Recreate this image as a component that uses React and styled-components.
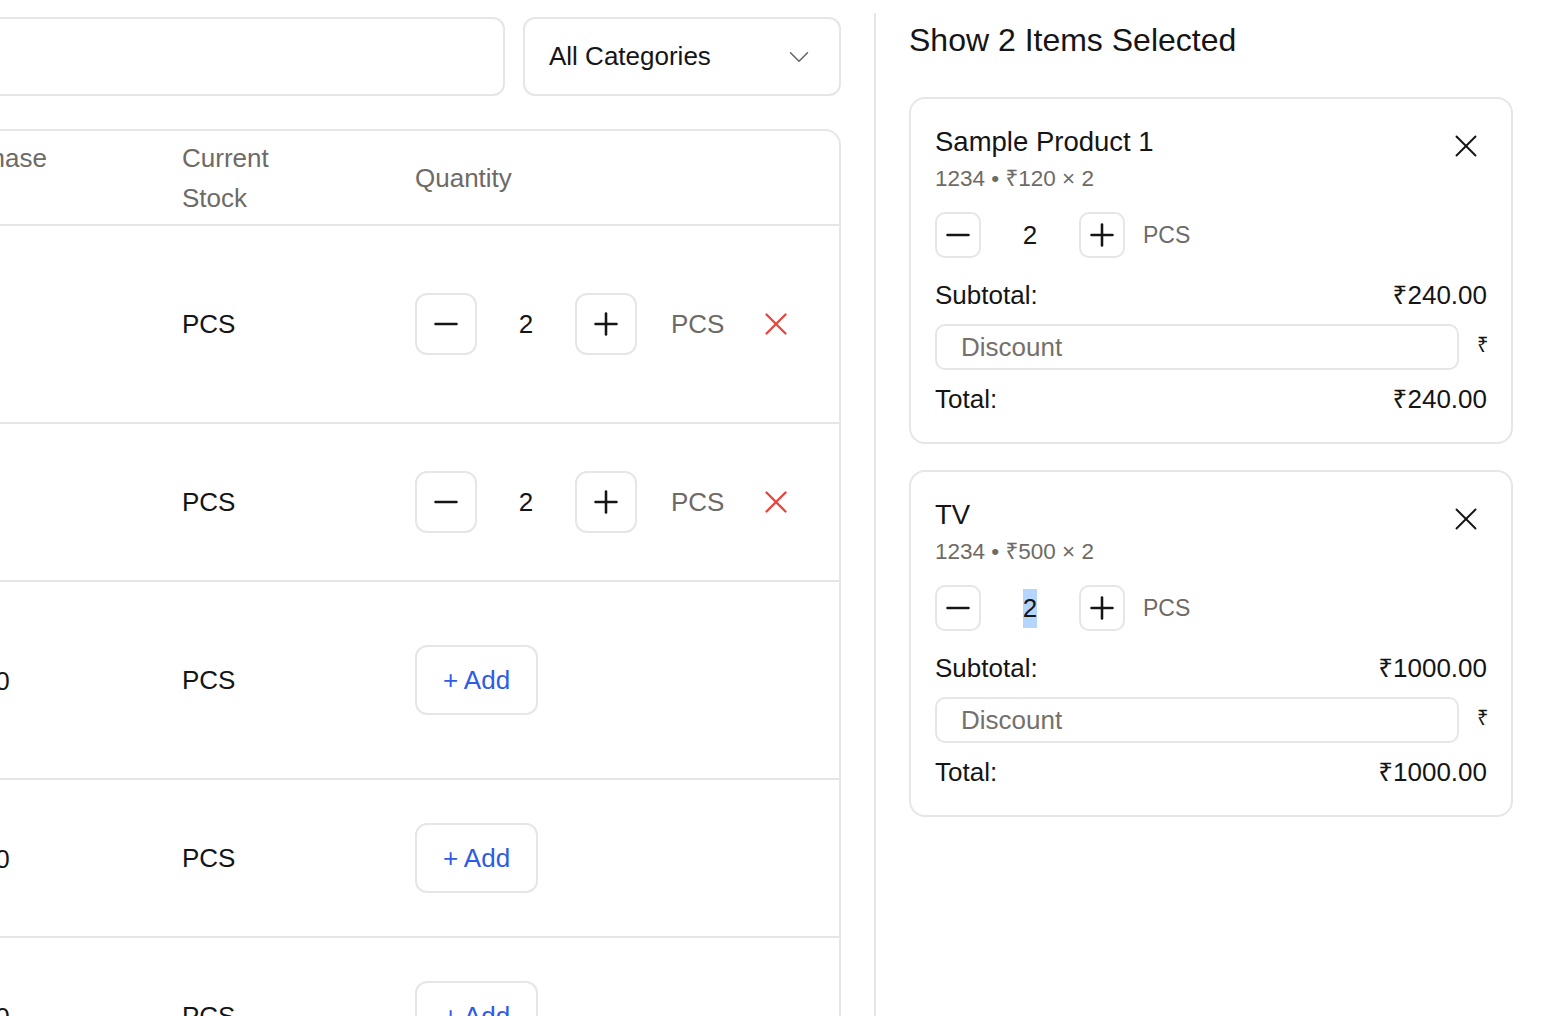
import React from "react";
import styled, { createGlobalStyle } from "styled-components";
import { Minus, Plus, X, ChevronDown } from "lucide-react";

const GlobalStyle = createGlobalStyle`
  html, body {
    margin: 0;
    padding: 0;
    background: #ffffff;
    overflow: hidden;
  }
  body {
    font-family: "Liberation Sans", "Noto Sans", "DejaVu Sans", sans-serif;
    color: #151515;
  }
  * {
    box-sizing: border-box;
  }
`;

const Page = styled.div`
  display: flex;
  height: 100vh;
  overflow: hidden;
`;

const LeftPanel = styled.div`
  flex: 0 0 1241px;
  margin-left: -400px;
  padding-top: 17px;
  display: flex;
  flex-direction: column;
  gap: 33px;
`;

const SearchRow = styled.div`
  flex-shrink: 0;
  display: flex;
  gap: 18px;
  height: 79px;
`;

const SearchInput = styled.input`
  flex: 1;
  border: 2px solid #e6e6e6;
  border-radius: 12px;
  outline: none;
  font: 26px "Liberation Sans", sans-serif;
`;

const CategorySelect = styled.div`
  width: 318px;
  display: flex;
  align-items: center;
  justify-content: space-between;
  padding: 0 23px 0 24px;
  border: 2px solid #e6e6e6;
  border-radius: 12px;
  font-size: 26px;
  color: #151515;
`;

const Table = styled.div`
  flex: 1 0 auto;
  border: 2px solid #e6e6e6;
  border-bottom: none;
  border-radius: 16px 16px 0 0;
`;

const Columns = `
  display: grid;
  grid-template-columns: 311px 245px 233px 1fr;
  align-items: center;
  padding: 0 24px;
  border-bottom: 2px solid #e6e6e6;
`;

const HeaderRow = styled.div`
  ${Columns}
  height: 95px;
`;

const HeaderLabel = styled.div`
  max-width: 130px;
  font-size: 26px;
  line-height: 40px;
  color: #6e6a66;
`;

const Row = styled.div`
  ${Columns}
  height: ${(p) => (p.$tall ? "198px" : "158px")};
`;

const Cell = styled.div`
  font-size: 26px;
  color: #151515;
`;

const Stepper = styled.div`
  display: flex;
  align-items: center;
`;

const StepButton = styled.button`
  width: ${(p) => p.$size}px;
  height: ${(p) => p.$size}px;
  padding: 0;
  display: flex;
  align-items: center;
  justify-content: center;
  background: #fff;
  border: 2px solid #e6e6e6;
  border-radius: ${(p) => (p.$size > 50 ? "12px" : "10px")};
  color: #151515;
`;

const StepValue = styled.div`
  width: 98px;
  text-align: center;
  font-size: 26px;
  line-height: 40px;
  color: #151515;
`;

const Selected = styled.span`
  display: inline-block;
  line-height: 39px;
  background: #b4d5fe;
`;

const Unit = styled.span`
  margin-left: ${(p) => p.$gap}px;
  font-size: ${(p) => p.$size}px;
  color: #6e6a66;
`;

const RemoveButton = styled.button`
  margin-left: 33px;
  padding: 0;
  border: none;
  background: none;
  display: flex;
  color: #e5483e;
`;

const AddButton = styled.button`
  width: 123px;
  height: 70px;
  background: #fff;
  border: 2px solid #e6e6e6;
  border-radius: 12px;
  font: 26px "Liberation Sans", sans-serif;
  color: #2d5be3;
`;

const RightPanel = styled.div`
  flex: 1;
  margin: 13px 0 0 33px;
  border-left: 2px solid #e6e6e6;
  padding: 8px 39px 0 33px;
  display: flex;
  flex-direction: column;
`;

const Heading = styled.h2`
  margin: 0 0 38px;
  font-size: 32px;
  line-height: 38px;
  font-weight: 400;
  color: #151515;
`;

const CardList = styled.div`
  display: flex;
  flex-direction: column;
  gap: 26px;
`;

const Card = styled.div`
  border: 2px solid #e6e6e6;
  border-radius: 16px;
  padding: 26px 24px 27px;
  display: flex;
  flex-direction: column;
`;

const CardHeader = styled.div`
  display: flex;
  justify-content: space-between;
  align-items: flex-start;
`;

const CardTitle = styled.div`
  font-size: 27.5px;
  line-height: 34px;
  color: #151515;
`;

const CloseButton = styled.button`
  margin: 2px 2px 0 0;
  padding: 0;
  border: none;
  background: none;
  display: flex;
  color: #151515;
`;

const CardMeta = styled.div`
  font-size: 22.5px;
  line-height: 28px;
  color: #6e6a66;
`;

const CardStepper = styled(Stepper)`
  margin-top: 19px;
`;

const SumRow = styled.div`
  display: flex;
  justify-content: space-between;
  margin-top: ${(p) => p.$top}px;
  font-size: 26px;
  line-height: 32px;
  color: #151515;
`;

const DiscountRow = styled.div`
  display: flex;
  align-items: center;
  gap: 18px;
  margin-top: 13px;
`;

const DiscountInput = styled.input`
  flex: 1;
  height: 46px;
  padding: 0 24px;
  border: 2px solid #e6e6e6;
  border-radius: 10px;
  outline: none;
  font: 26px "Liberation Sans", sans-serif;
  color: #151515;

  &::placeholder {
    color: #75706b;
  }
`;

const Rupee = styled.span`
  width: 10px;
  font-size: 20px;
  line-height: 20px;
  margin-top: -4px;
  color: #151515;
`;

const rows = [
  { name: "Sample Product 1", price: "₹120", qty: 2, tall: true },
  { name: "TV", price: "₹500", qty: 2 },
  { name: "Sample Product 2", price: "₹1000", tall: true },
  { name: "Speaker", price: "₹1000" },
  { name: "Mouse", price: "₹1000" },
];

const selected = [
  { name: "Sample Product 1", meta: "1234 • ₹120 × 2", qty: 2, subtotal: "₹240.00", total: "₹240.00" },
  { name: "TV", meta: "1234 • ₹500 × 2", qty: 2, subtotal: "₹1000.00", total: "₹1000.00", highlight: true },
];

function QtyStepper({ size, value, highlight }) {
  return (
    <>
      <StepButton $size={size}>
        <Minus size={36} strokeWidth={1.7} />
      </StepButton>
      <StepValue>{highlight ? <Selected>{value}</Selected> : value}</StepValue>
      <StepButton $size={size}>
        <Plus size={36} strokeWidth={1.7} />
      </StepButton>
    </>
  );
}

export default function App() {
  return (
    <>
      <GlobalStyle />
      <Page>
        <LeftPanel>
          <SearchRow>
            <SearchInput />
            <CategorySelect>
              All Categories
              <ChevronDown size={34} strokeWidth={1.1} color="#666" />
            </CategorySelect>
          </SearchRow>
          <Table>
            <HeaderRow>
              <HeaderLabel>Product</HeaderLabel>
              <HeaderLabel>Purchase Price</HeaderLabel>
              <HeaderLabel>Current Stock</HeaderLabel>
              <HeaderLabel>Quantity</HeaderLabel>
            </HeaderRow>
            {rows.map((r) => (
              <Row key={r.name} $tall={r.tall}>
                <Cell>{r.name}</Cell>
                <Cell>{r.price}</Cell>
                <Cell>PCS</Cell>
                <Stepper>
                  {r.qty ? (
                    <>
                      <QtyStepper size={62} value={r.qty} />
                      <Unit $gap={34} $size={26}>PCS</Unit>
                      <RemoveButton>
                        <X size={38} strokeWidth={1.5} />
                      </RemoveButton>
                    </>
                  ) : (
                    <AddButton>+ Add</AddButton>
                  )}
                </Stepper>
              </Row>
            ))}
          </Table>
        </LeftPanel>
        <RightPanel>
          <Heading>Show 2 Items Selected</Heading>
          <CardList>
            {selected.map((s) => (
              <Card key={s.name}>
                <CardHeader>
                  <CardTitle>{s.name}</CardTitle>
                  <CloseButton>
                    <X size={38} strokeWidth={1.2} />
                  </CloseButton>
                </CardHeader>
                <CardMeta>{s.meta}</CardMeta>
                <CardStepper>
                  <QtyStepper size={46} value={s.qty} highlight={s.highlight} />
                  <Unit $gap={18} $size={23}>PCS</Unit>
                </CardStepper>
                <SumRow $top={21}>
                  <span>Subtotal:</span>
                  <span>{s.subtotal}</span>
                </SumRow>
                <DiscountRow>
                  <DiscountInput placeholder="Discount" />
                  <Rupee>₹</Rupee>
                </DiscountRow>
                <SumRow $top={13}>
                  <span>Total:</span>
                  <span>{s.total}</span>
                </SumRow>
              </Card>
            ))}
          </CardList>
        </RightPanel>
      </Page>
    </>
  );
}
